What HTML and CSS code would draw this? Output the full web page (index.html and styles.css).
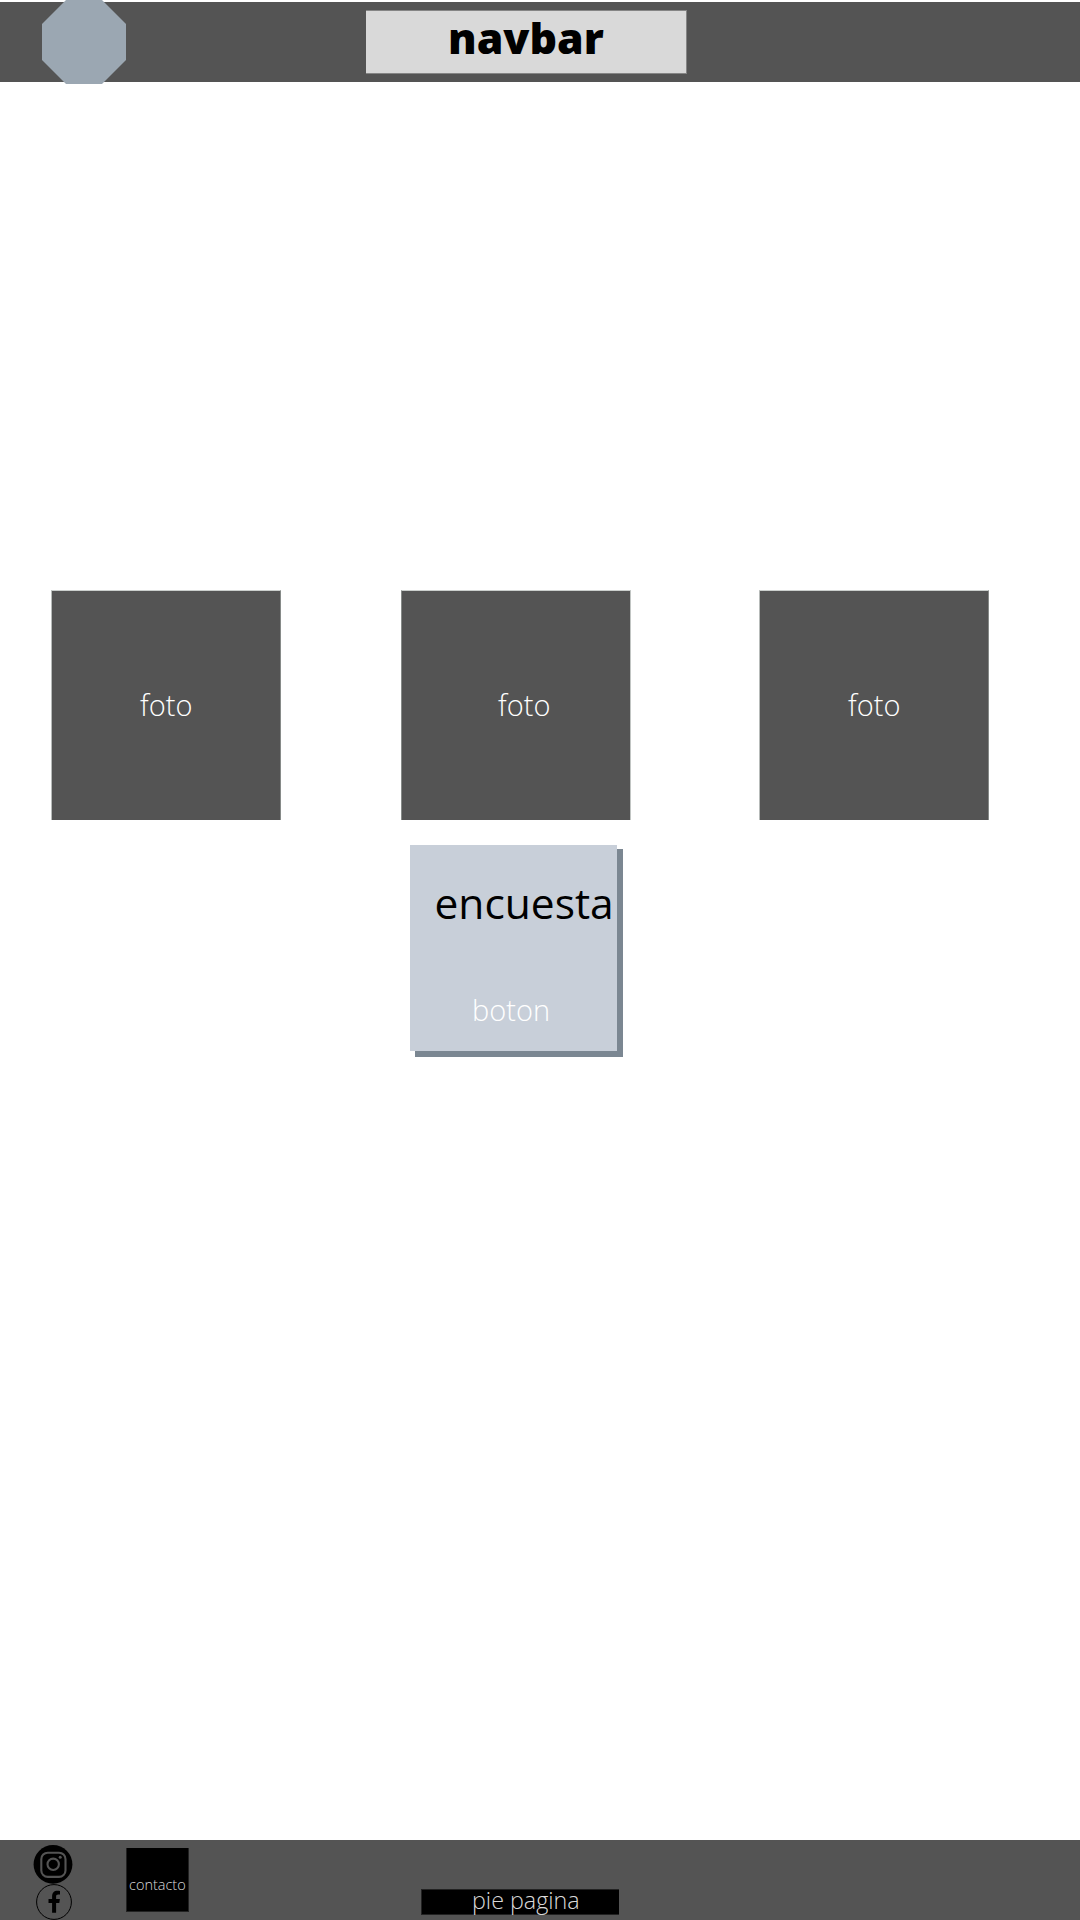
FILE: index.html
```html
<!DOCTYPE html>
<html lang="es">
<head>
<meta charset="utf-8">
<title>navbar</title>
<link rel="stylesheet" href="styles.css">
</head>
<body>
<header class="navbar">
  <div class="logo"></div>
  <h1 class="navbar-title"><span>navbar</span></h1>
</header>
<main class="content">
  <section class="gallery">
    <div class="photo photo-left"><span>foto</span></div>
    <div class="photo photo-center"><span>foto</span></div>
    <div class="photo photo-right"><span>foto</span></div>
  </section>
  <section class="survey">
    <h2 class="survey-title">encuesta</h2>
    <a class="survey-button">boton</a>
  </section>
</main>
<footer class="footer">
  <div class="social">
    <svg class="instagram" viewBox="0 0 40 40" width="40" height="40">
      <circle cx="20" cy="20.4" r="19.4" fill="#000"/>
      <g fill="none" stroke="#545454" stroke-width="2.1">
        <rect x="8.3" y="8.7" width="24.2" height="24.2" rx="6.5"/>
        <circle cx="20.2" cy="20.3" r="5.7"/>
      </g>
      <circle cx="27.2" cy="13.3" r="1.5" fill="#545454"/>
    </svg>
    <svg class="facebook" viewBox="0 0 36 36" width="36" height="36">
      <circle cx="18" cy="18" r="17.4" fill="none" stroke="#000" stroke-width="1"/>
      <path d="M16.1 28.7V18.9h-3.6v-3.8h3.6v-2.7c0-3.7 2-5.7 5.3-5.7 1.1 0 2.1.1 2.6.2v3.5h-1.8c-1.6 0-2.1.9-2.1 2.1v2.6h3.8l-.6 3.8h-3.2v9.8z"/>
    </svg>
  </div>
  <div class="contact"><span>contacto</span></div>
  <div class="footer-label"><span>pie pagina</span></div>
</footer>
</body>
</html>
```
FILE: styles.css
```css
* { box-sizing: border-box; }
body {
  margin: 0;
  width: 1080px;
  height: 1920px;
  display: flex;
  flex-direction: column;
  overflow: hidden;
  background: #fff;
  font-family: "Open Sans", sans-serif;
}
h1, h2 { margin: 0; }
.navbar {
  display: flex;
  align-items: flex-start;
  height: 80px;
  margin-top: 2px;
  background: #545454;
}
.logo {
  width: 84px;
  height: 84px;
  margin: -2px 240px 0 42px;
  background: #9ba7b2;
  clip-path: polygon(24px 0, 60px 0, 84px 24px, 84px 60px, 60px 84px, 24px 84px, 0 60px, 0 24px);
}
.navbar-title {
  width: 321px;
  height: 64px;
  margin-top: 8px;
  padding-left: 82px;
  border: 1px solid #858585;
  border-left: 0;
  background: #d9d9d9;
  font-size: 42.8px;
  font-weight: 800;
  line-height: 54px;
}
.content { flex: 1; padding-top: 508px; }
.gallery { display: flex; }
.photo {
  width: 230px;
  height: 230px;
  border: solid;
  border-width: 1px 1px 0 1px;
  border-color: #cbcfcd #868a88 #545454 #b7bbb9;
  background: #545454;
  color: #fff;
  font-size: 29px;
  font-weight: 300;
  line-height: 227px;
}
.photo-left { margin-left: 51px; padding-left: 88px; }
.photo-center { margin-left: 120px; padding-left: 96px; border-color: #cbcfcd #c1c5c3 #545454 #868a88; }
.photo-right { margin-left: 128px; padding-left: 88px; }
.survey {
  display: flex;
  flex-direction: column;
  width: 207px;
  height: 206px;
  margin: 25px 0 0 410px;
  padding-top: 30px;
  background: #c8cfd9;
  box-shadow: 5px 5px 0 1px #7b8792;
  clip-path: polygon(0 0, 207px 0, 207px 4px, 213px 4px, 213px 212px, 5px 212px, 5px 206px, 0 206px);
}
.survey-title {
  padding-left: 24.5px;
  font-size: 42.5px;
  font-weight: 400;
  line-height: 56px;
}
.survey-button {
  margin-top: 59px;
  padding-left: 62px;
  color: #fff;
  font-size: 29px;
  font-weight: 300;
  line-height: 40px;
}
.footer {
  display: flex;
  align-items: flex-start;
  height: 80px;
  background: #545454;
}
.social {
  display: flex;
  flex-direction: column;
  width: 40px;
  margin-left: 33px;
  padding-top: 4px;
}
.instagram, .facebook { display: block; flex: none; }
.facebook { margin: 0 0 0 3px; }
.contact {
  width: 63px;
  height: 64px;
  margin: 8px 0 0 53px;
  padding-left: 2px;
  border: 1px solid #222;
  border-top: 0;
  background: #000;
  color: #d9d9d9;
  font-size: 14.5px;
  font-weight: 300;
  line-height: 73px;
}
.footer-label {
  width: 198px;
  height: 26px;
  margin: 49px 0 0 232px;
  padding-left: 50px;
  border: 1px solid #222;
  border-right: 0;
  background: #000;
  color: #d9d9d9;
  font-size: 23.3px;
  font-weight: 300;
  line-height: 21px;
}
```
